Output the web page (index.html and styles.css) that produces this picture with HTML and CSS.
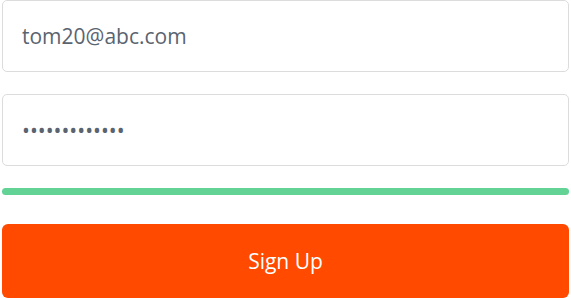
FILE: index.html
```html
<!DOCTYPE html>
<html>
<head>
<meta charset="utf-8">
<link rel="stylesheet" href="styles.css">
</head>
<body>
<form class="form">
  <input class="field" type="text" value="tom20@abc.com">
  <input class="field" type="password" value="abcdefghijklm">
  <div class="strength"></div>
  <button class="submit" type="button">Sign Up</button>
</form>
</body>
</html>
```
FILE: styles.css
```css
html, body {
  margin: 0;
  padding: 0;
  background: #fff;
}
.form {
  display: flex;
  flex-direction: column;
  padding: 0 2px;
  font-family: "Open Sans", sans-serif;
}
.field {
  box-sizing: border-box;
  height: 72px;
  margin: 0 0 22px;
  padding: 0 19px;
  border: 1px solid #dcdcdc;
  border-radius: 5px;
  font-family: "Open Sans", sans-serif;
  font-size: 21px;
  color: #5a6470;
  background: #fff;
  outline: none;
}
.strength {
  height: 7px;
  border-radius: 4px;
  background: #62d394;
  margin: 0 0 29px;
}
.submit {
  height: 74px;
  border: none;
  border-radius: 6px;
  background: #ff4a00;
  color: #fff;
  font-family: "Open Sans", sans-serif;
  font-size: 21px;
  cursor: pointer;
}
```
